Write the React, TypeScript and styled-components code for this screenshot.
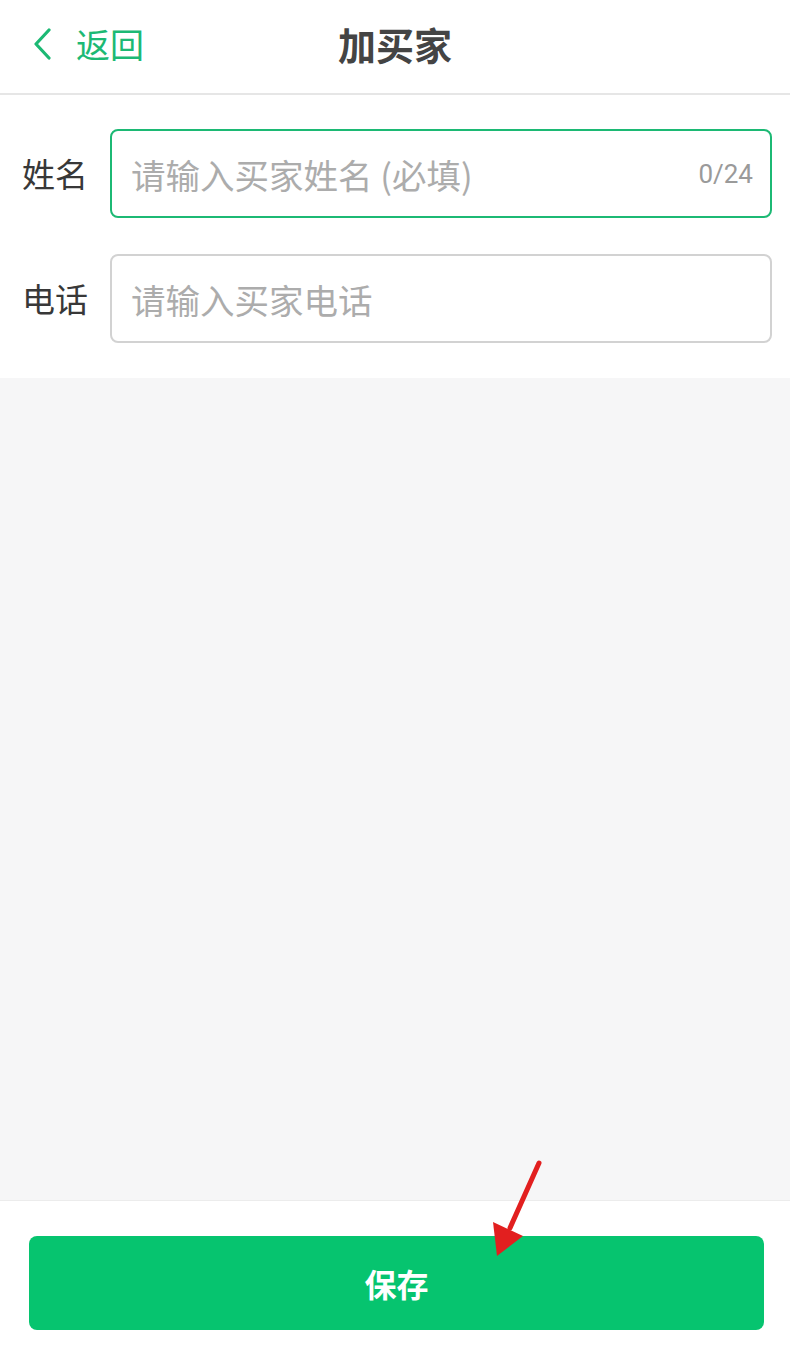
import React from "react";
import styled, { createGlobalStyle } from "styled-components";

const GlobalStyle = createGlobalStyle`
  html, body {
    margin: 0;
    padding: 0;
  }
  body {
    font-family: "Noto Sans CJK SC", "Noto Sans", "Liberation Sans", sans-serif;
    -webkit-font-smoothing: antialiased;
  }
  * {
    box-sizing: border-box;
  }
`;

const colors = {
  green: "#1cb974",
  button: "#06c46f",
  text: "#383838",
  title: "#444444",
  placeholder: "#acacac",
  counter: "#9a9a9a",
  border: "#d2d2d2",
  divider: "#e6e6e6",
  canvas: "#f6f6f7",
  arrow: "#e21f1f",
};

const Page = styled.div`
  position: relative;
  min-height: 100vh;
  display: flex;
  flex-direction: column;
  background: ${colors.canvas};
`;

const Header = styled.header`
  height: 95px;
  display: grid;
  grid-template-columns: 1fr auto 1fr;
  align-items: center;
  padding-bottom: 6px;
  background: #fff;
  border-bottom: 2px solid ${colors.divider};
`;

const BackLink = styled.a`
  justify-self: start;
  display: flex;
  align-items: center;
  gap: 23px;
  padding-left: 33px;
  color: ${colors.green};
  font-size: 34px;
  text-decoration: none;
  line-height: 1;
  cursor: pointer;
`;

const Title = styled.h1`
  margin: 0;
  font-size: 38px;
  font-weight: 700;
  color: ${colors.title};
  line-height: 1;
`;

const Form = styled.section`
  background: #fff;
  padding: 34px 18px 35px 22px;
  display: flex;
  flex-direction: column;
  gap: 36px;
`;

const Row = styled.label`
  display: flex;
  align-items: center;
`;

const Label = styled.span`
  width: 88px;
  flex-shrink: 0;
  font-size: 33px;
  color: ${colors.text};
  line-height: 1;
`;

const Field = styled.div<{ $focused?: boolean }>`
  flex: 1;
  height: 89px;
  display: flex;
  align-items: center;
  padding: 0 17px 0 19px;
  border: 2px solid ${({ $focused }) => ($focused ? colors.green : colors.border)};
  border-radius: 8px;
  background: #fff;
`;

const Input = styled.input`
  flex: 1;
  min-width: 0;
  border: none;
  outline: none;
  background: transparent;
  font-family: inherit;
  font-size: 34.5px;
  color: ${colors.text};
  padding: 0;

  &::placeholder {
    color: ${colors.placeholder};
  }
`;

const Counter = styled.span`
  font-size: 26px;
  color: ${colors.counter};
  font-family: "Roboto", "Noto Sans", sans-serif;
`;

const Spacer = styled.div`
  flex: 1;
`;

const Footer = styled.footer`
  background: #fff;
  border-top: 1px solid #ececec;
  padding: 35px 26px 21px 29px;
`;

const SaveButton = styled.button`
  width: 100%;
  height: 94px;
  border: none;
  border-radius: 8px;
  background: ${colors.button};
  color: #fff;
  font-family: inherit;
  font-size: 32px;
  font-weight: 700;
  cursor: pointer;
`;

const Arrow = styled.svg`
  position: absolute;
  left: 490px;
  top: 1160px;
  width: 55px;
  height: 100px;
  pointer-events: none;
`;

export default function App() {
  return (
    <Page>
      <GlobalStyle />
      <Header>
        <BackLink>
          <svg width="20" height="32" viewBox="0 0 20 32" fill="none">
            <path
              d="M16 2 L3 16 L16 30"
              stroke={colors.green}
              strokeWidth="3.2"
              strokeLinecap="round"
              strokeLinejoin="round"
            />
          </svg>
          返回
        </BackLink>
        <Title>加买家</Title>
        <div />
      </Header>

      <Form>
        <Row>
          <Label>姓名</Label>
          <Field $focused>
            <Input placeholder="请输入买家姓名 (必填)" maxLength={24} />
            <Counter>0/24</Counter>
          </Field>
        </Row>
        <Row>
          <Label>电话</Label>
          <Field>
            <Input placeholder="请输入买家电话" type="tel" />
          </Field>
        </Row>
      </Form>

      <Spacer />

      <Footer>
        <SaveButton>保存</SaveButton>
      </Footer>

      <Arrow viewBox="0 0 55 100">
        <line x1="49" y1="3" x2="20" y2="68" stroke={colors.arrow} strokeWidth="5" strokeLinecap="round" />
        <polygon points="7,96 3,62 33,76" fill={colors.arrow} />
      </Arrow>
    </Page>
  );
}
